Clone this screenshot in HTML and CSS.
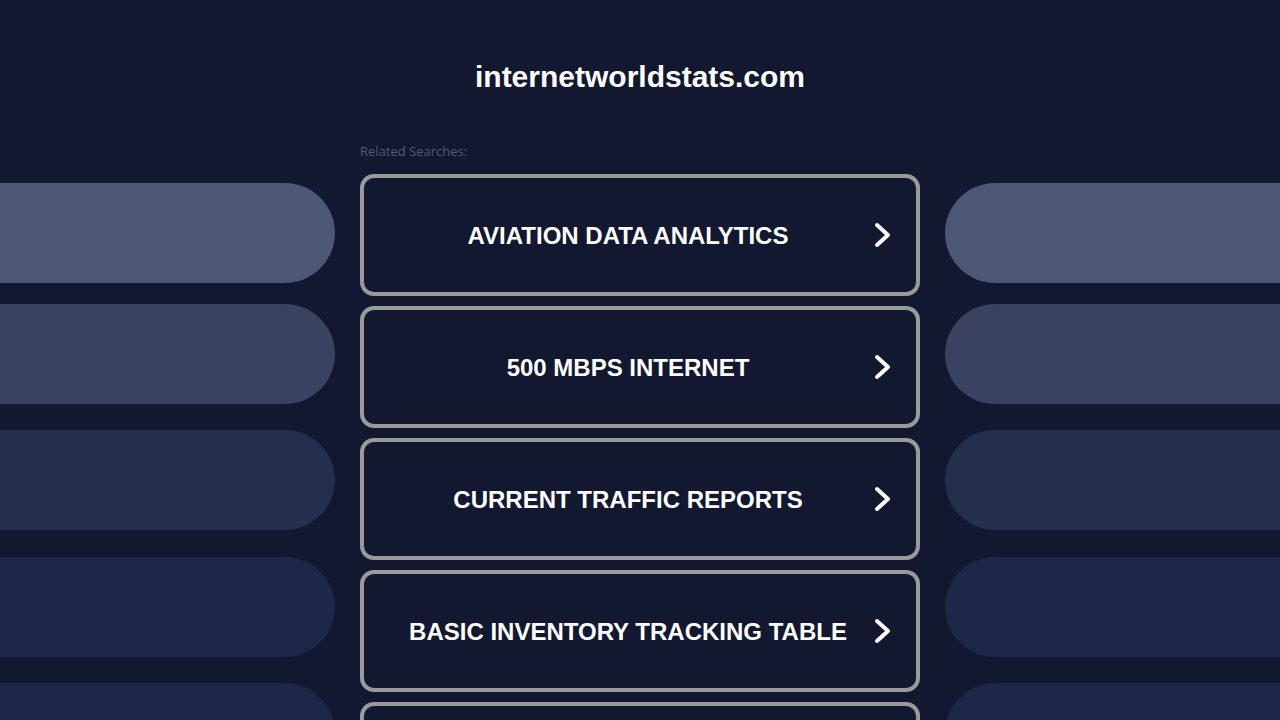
FILE: index.html
```html
<!DOCTYPE html>
<html lang="en">
<head>
<meta charset="utf-8">
<title>internetworldstats.com</title>
<link rel="stylesheet" href="styles.css">
</head>
<body>
<header class="header">
  <h1 class="title">internetworldstats.com</h1>
</header>
<main class="layout">
  <div class="side side-left">
    <div class="pill pill-1"></div>
    <div class="pill pill-2"></div>
    <div class="pill pill-3"></div>
    <div class="pill pill-4"></div>
    <div class="pill pill-5"></div>
  </div>
  <div class="center">
    <div class="label">Related Searches:</div>
    <div class="list">
      <a class="btn" href="#"><span class="btn-text">AVIATION DATA ANALYTICS</span><svg class="chev" viewBox="0 0 20 30" width="20" height="30"><polyline points="5,5 16,15 5,25"/></svg></a>
      <a class="btn" href="#"><span class="btn-text">500 MBPS INTERNET</span><svg class="chev" viewBox="0 0 20 30" width="20" height="30"><polyline points="5,5 16,15 5,25"/></svg></a>
      <a class="btn" href="#"><span class="btn-text">CURRENT TRAFFIC REPORTS</span><svg class="chev" viewBox="0 0 20 30" width="20" height="30"><polyline points="5,5 16,15 5,25"/></svg></a>
      <a class="btn" href="#"><span class="btn-text">BASIC INVENTORY TRACKING TABLE</span><svg class="chev" viewBox="0 0 20 30" width="20" height="30"><polyline points="5,5 16,15 5,25"/></svg></a>
      <a class="btn" href="#"><span class="btn-text"></span><svg class="chev" viewBox="0 0 20 30" width="20" height="30"><polyline points="5,5 16,15 5,25"/></svg></a>
    </div>
  </div>
  <div class="side side-right">
    <div class="pill pill-1"></div>
    <div class="pill pill-2"></div>
    <div class="pill pill-3"></div>
    <div class="pill pill-4"></div>
    <div class="pill pill-5"></div>
  </div>
</main>
</body>
</html>
```

FILE: styles.css
```css
html, body {
  margin: 0;
  padding: 0;
  background: #111830;
  height: 720px;
  overflow: hidden;
}

body {
  font-family: "Liberation Sans", Arial, sans-serif;
  color: #ffffff;
}

.header {
  height: 140px;
  text-align: center;
}

.title {
  margin: 0;
  padding-top: 59px;
  font-size: 30px;
  line-height: 36px;
  font-weight: bold;
  color: #ffffff;
}

.layout {
  display: grid;
  grid-template-columns: 335px 560px 335px;
  column-gap: 25px;
}

.side {
  display: flex;
  flex-direction: column;
  padding-top: 43px;
}

.pill {
  height: 100px;
  flex-shrink: 0;
}

.side-left .pill {
  border-radius: 0 50px 50px 0;
}

.side-right .pill {
  border-radius: 50px 0 0 50px;
}

.pill-1 { background: #4d5674; }
.pill-2 { background: #3a4260; margin-top: 21px; }
.pill-3 { background: #262e4e; margin-top: 26px; }
.pill-4 { background: #1e2747; margin-top: 27px; }
.pill-5 { background: #1e2747; margin-top: 26px; }

.label {
  font-family: "Open Sans", "Liberation Sans", sans-serif;
  font-size: 13px;
  line-height: 20px;
  color: #505a7c;
  height: 20px;
  padding-top: 1px;
  margin-bottom: 13px;
}

.list {
  display: flex;
  flex-direction: column;
  gap: 10px;
}

.btn {
  box-sizing: border-box;
  height: 122px;
  border: 4px solid #9a9a9c;
  border-radius: 14px;
  background: #111830;
  display: flex;
  align-items: center;
  padding-left: 20px;
  text-decoration: none;
  flex-shrink: 0;
}

.btn-text {
  flex: 1;
  text-align: center;
  font-size: 24px;
  font-weight: bold;
  color: #ffffff;
  white-space: nowrap;
  padding-top: 2px;
}

.chev {
  margin-right: 24px;
  flex-shrink: 0;
}

.chev polyline {
  fill: none;
  stroke: #ffffff;
  stroke-width: 4;
  stroke-linecap: round;
  stroke-linejoin: round;
}
```
